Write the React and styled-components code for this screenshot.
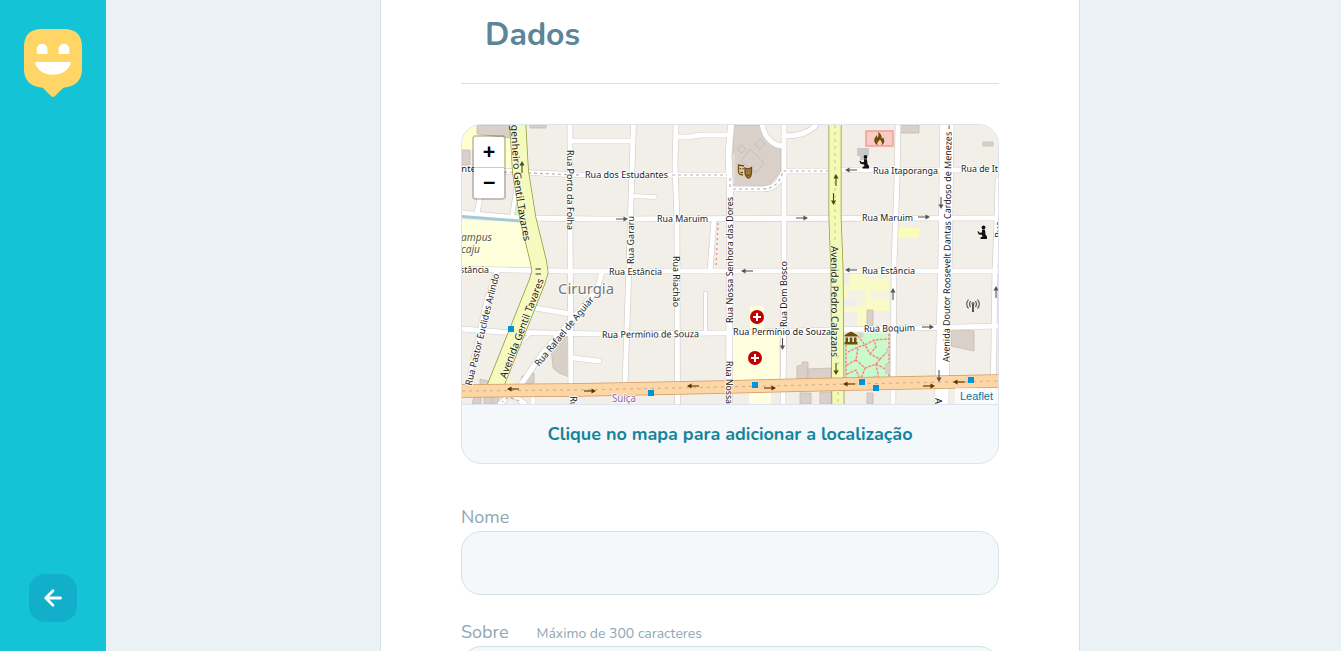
import React from "react";
import styled, { createGlobalStyle } from "styled-components";

const GlobalStyle = createGlobalStyle`
  * { box-sizing: border-box; margin: 0; padding: 0; }
  body { background: #ebf2f5; overflow: hidden; font-family: Nunito, Lato, sans-serif; }
`;

const Page = styled.div`
  display: flex;
  height: 100vh;
  overflow: hidden;
`;

const Sidebar = styled.aside`
  flex: 0 0 106px;
  display: flex;
  flex-direction: column;
  justify-content: space-between;
  align-items: center;
  padding: 29px 0;
  background: #15c3d6;
`;

const BackButton = styled.button`
  display: flex;
  align-items: center;
  justify-content: center;
  width: 48px;
  height: 48px;
  border: 0;
  border-radius: 16px;
  background: #12afcb;
`;

const Main = styled.main`
  flex: 1;
  display: flex;
  justify-content: center;
  padding-right: 107px;
  padding-left: 106px;
`;

const Form = styled.form`
  flex: 0 0 700px;
  height: 900px;
  padding: 0 80px;
  background: #fff;
  border: solid #d3e2e5;
  border-width: 0 1px;
  margin-left: 14px;
`;

const Legend = styled.h1`
  height: 84px;
  margin-bottom: 40px;
  padding: 15px 24px 0;
  border-bottom: 1px solid #d3e2e5;
  color: #5c8599;
  font-size: 32px;
  font-weight: 700;
  line-height: 40px;
`;

const MapCard = styled.section`
  height: 340px;
  display: flex;
  flex-direction: column;
  overflow: hidden;
  border: 1px solid #dde3f0;
  border-radius: 20px;
  background: #f4f8fb;
`;

const MapView = styled.div`
  position: relative;
  height: 279px;
  svg { display: block; }
`;

const ZoomControl = styled.div`
  position: absolute;
  top: 10px;
  left: 10px;
  width: 34px;
  border: 2px solid rgba(0, 0, 0, 0.2);
  border-radius: 4px;
  background-clip: padding-box;
`;

const ZoomButton = styled.button`
  display: block;
  width: 30px;
  height: ${(p) => (p.$divided ? 31 : 30)}px;
  border: 0;
  border-bottom: ${(p) => (p.$divided ? "1px solid #ccc" : "0")};
  border-radius: ${(p) => (p.$divided ? "2px 2px 0 0" : "0 0 2px 2px")};
  background: #fff;
  color: #000;
  font: bold 20px/28px "DejaVu Sans Mono", monospace;
  padding-bottom: 2px;
`;

const Attribution = styled.div`
  position: absolute;
  right: 0;
  bottom: 0;
  padding: 0 5px;
  background: rgba(255, 255, 255, 0.7);
  color: #0078a8;
  font: 11px/16px "Liberation Sans", Arial, sans-serif;
`;

const MapFooter = styled.footer`
  flex: 1;
  border-top: 1px solid #dde3f0;
  color: #15849a;
  text-align: center;
  font-size: 18px;
  font-weight: 700;
  line-height: 58px;
`;

const Field = styled.div`
  margin-top: ${(p) => p.$gap}px;
`;

const Label = styled.label`
  display: flex;
  align-items: center;
  height: 28px;
  color: #8fa7b3;
  font-size: 18px;
  line-height: 28px;
`;

const Hint = styled.span`
  margin-left: 28px;
  padding-top: 3px;
  font-size: 14px;
`;

const Input = styled.div`
  height: ${(p) => p.$height}px;
  border: 1px solid #d3e2e5;
  border-radius: 20px;
  background: #f4f8fb;
`;

/* Centre line and width of each minor street */
const STREETS = [
  ["M462 213L520 218L600 219L998 218", 5],
  ["M462 269L560 271L760 271L998 271", 5],
  ["M462 329L500 332L600 334L720 333L831 330L998 326", 5],
  ["M480 170L580 175L728 175", 5],
  ["M729 189H762Q776 189 781 177Q783 171 790 171L831 171L845 170L998 170", 5],
  ["M570 125V210L571 404", 5],
  ["M633.500 125L632 170L629 265L625 384", 5],
  ["M676 125L675 165L677 220L677.500 404", 5],
  ["M731 125L728.500 155L730 190L729 404", 6],
  ["M784 125L784 290L783 404", 5],
  ["M898 125L897 180L894 265L893 404", 5],
  ["M998 180L997 220L995 270L993 404", 5],
  ["M571 141H632", 5],
  ["M632 196L655 197", 4],
  ["M677 137H689Q697 135 704 135H730", 5],
  ["M762 120Q762 134 772 142Q777 146 784 146", 5],
  ["M784 136Q799 136 806 132Q814 129 817 123", 5],
  ["M714 220L710 271", 5],
  ["M705.500 293V333", 3],
  ["M535 308L571 314", 5],
  ["M573 358L599 361", 5],
  ["M602 272L597 290L542 354L520 386", 5],
  ["M497 271L487 300L468 386", 5],
  ["M529 335L517 348", 2],
  ["M483 180L477 214", 5],
  ["M517 185L512 216", 4],
  ["M533 394V404", 5],
  ["M515 390L500 404M507 390L525 404", 5],
];

const BUILDINGS = [
  "477,125 509,125 510,138 477,134",
  "462,150 470,150 470,165 462,165",
  "530,125 546,125 546,128 530,128",
  "733,125 761,125 764,136 781,148 781,172 768,186 733,187",
  "551,347 569,333 569,377 559,373 553,368",
  "900,125 919,125 919,133 900,133",
  "983,142 993,142 993,146 983,146",
  "951,329 974,331 974,351 951,346",
  "797,366 802,365 802,362 808,362 808,379 797,379",
  "808,369 831,368 831,380 808,380",
  "800,393 811,393 811,404 800,404",
  "820,392 831,392 831,404 820,404",
  "867,310 873,310 873,326 867,326",
  "867,393 873,393 873,404 867,404",
  "474,396 481,396 481,404 472,404",
  "484,396 492,396 492,404 484,404",
  "493,395 500,395 497,404 493,404",
  "480,379 488,381 487,385 480,385",
  "522,376 534,373 534,383 520,384",
];

/* text, x, y of the baseline start, drawn length, angle */
const NAMES = [
  ["ante", 456, 171.500, 20, 0],
  ["Rua dos Estudantes", 585, 178, 83, 0],
  ["Rua Maruim", 657, 222, 51, 0],
  ["Rua Maruim", 862, 221, 51, 0],
  ["Rua Itaporanga", 873, 174, 65, 0],
  ["Rua de Ita", 961, 172, 42, 0],
  ["Rua Estância", 609, 275, 53, 0],
  ["Rua Estância", 862, 274, 53, 0],
  ["stância", 460, 273, 29, 0],
  ["Rua Permínio de Souza", 602, 338, 97, -0.500],
  ["Rua Permínio de Souza", 733, 335, 98, 0],
  ["Rua Boquim", 864, 332, 51, -1],
  ["Rua Porto da Folha", 567, 150, 80, 90],
  ["Rua Riachão", 673, 256, 51, 90],
  ["Rua Nossa", 726, 361, 43, 90],
  ["Rua", 569.500, 396, 17, 90],
  ["Rua Gararu", 634, 264, 48, -90],
  ["Rua Nossa Senhora das Dores", 733, 323, 126, -90],
  ["Rua Dom Bosco", 787, 327, 66, -90],
  ["Avenida Doutor Roosevelt Dantas Cardoso de Menezes –", 949.500, 362, 237, -89.500],
  ["A", 935, 398, 6, 90],
  ["Rua Pastor Euclides Arlindo", 471.500, 386, 115, -76],
  ["Rua Rafael de Aguiar", 539, 367, 87, -50.500],
  ["Rua", 1001.500, 238, 17, -90],
];

const AVENUES = [
  ["Avenida Pedro Calazans", 831, 246, 111, 89.800],
  ["Avenida Gentil Tavares", 506, 379, 106, -69],
];

/* centre and heading of each one-way arrow */
const ARROWS = [
  [622, 219, 0], [802, 218, 0], [924, 217, 0], [928, 327, 0],
  [851, 170, 180], [747, 271, 180], [851, 270, 180],
  [782.500, 344, 90], [941, 203, 90], [939, 376, 90],
  [893, 294, -90], [996, 292, -90],
];
const MAIN_ARROWS = [
  [513, 389, 180], [590, 391, 0], [693, 386, 180], [770, 388, 0],
  [849, 384, 180], [929, 386, 0], [959, 382, 180],
  [836, 180, -90], [833.500, 199, 90], [836, 369, 90], [522, 167, -90],
];

const Arrow = ({ at: [x, y, angle], color }) => (
  <g transform={`translate(${x} ${y}) rotate(${angle})`}>
    <path d="M-6 0H3" stroke={color} strokeWidth="1.100" />
    <path d="M1.500 -2.500L6 0L1.500 2.500Z" fill={color} />
  </g>
);

const Pray = ({ x, y }) => (
  <g transform={`translate(${x} ${y})`}>
    <circle cx="7" cy="2" r="1.900" />
    <path d="M5.500 4.200H8.500L9 9L10.500 11V13.500H4V12L6 11L5.500 9.500L2 8.800L1 6L2 5.700L3 7.300L5.500 7Z" />
  </g>
);

const CityMap = () => (
  <svg width="536" height="279" viewBox="462 125 536 279">
    <rect x="462" y="125" width="536" height="279" fill="#f2efe9" />
    <path d="M462 125H516L518 170L480 168V150H462Z" fill="#ffffcf" />
    <path d="M462 220L522 222L531 268L462 266Z" fill="#ffffdc" />
    <path d="M750 306H764V330H779V380H732V334H750ZM749 393H771V404H749Z" fill="#ffffe0" />
    <path d="M897 228H919V238H897Z" fill="#fcfcb9" />
    <path d="M850 274H890V311H872V326H857V312H844V307H857V298H844V286H850Z" fill="#fafac4" />
    <path d="M505 379L518 384H502Z" fill="#f7fabf" />
    <path d="M848 290H866V305H848ZM870 291H890V299H870ZM844 312H856V326H844ZM872 311H890V326H872ZM866 276H890V279H866Z" fill="#f2efe9" opacity=".75" />
    <path d="M517 203L514 217H523Z" fill="#c8facc" />
    <g fill="#d9d0c9" stroke="#c4b6ab" strokeWidth=".7">
      {BUILDINGS.map((points) => <polygon key={points} points={points} />)}
      <path d="M750 149L764 163L756 173L741 161ZM755 145L760 139L765 144L760 149ZM737 150L741 145L746 149L742 153Z" fill="none" />
    </g>
    <path d="M857 148H869V156H865V160H860V156H857Z" fill="#c9c9c9" />
    <path d="M844 333H890V380H844Z" fill="#c8facc" />
    <g fill="none" stroke="#ecc9b8" strokeWidth="1.600">
      <path id="trails" d="M846 345V379H889V333M858 336L865 345L874 340L889 339M848 352L858 347L865 345L870 354L880 359L889 350M847 365L856 360L858 347M856 360L865 368L876 364L880 359M865 368L861 379M876 364L879 379M876 364L889 371M870 354L876 347L874 340M847 374L856 370L860 379" />
    </g>
    <g fill="none" stroke="#ee8078" strokeWidth="1.200" strokeDasharray="2 2">
      <use href="#trails" />
      <path d="M718 223L716 268" strokeDasharray="2 3" />
    </g>
    <path d="M844 332H853L858 337H844Z" fill="#f2efe9" />
    <g fill="#d9d0c9"><circle cx="861" cy="335" r="2.500" /><path d="M886 348H890V353H886ZM885 363H890V374H885ZM871 377L877 375L881 380H871Z" /></g>

    <g fill="none" strokeLinecap="round" strokeLinejoin="round">
      <g stroke="#cfccc7">
        {STREETS.map(([d, w]) => <path key={d} d={d} strokeWidth={w + 1.200} />)}
        <path d="M947 120L945 265L941.500 408" strokeWidth="14.500" />
      </g>
      <g stroke="#fff">
        {STREETS.map(([d, w]) => <path key={d} d={d} strokeWidth={w} />)}
        <path d="M947 120L945 265L941.500 408" strokeWidth="13.500" />
      </g>
    </g>
    <path d="M734 154V184" stroke="#e9e0d5" strokeWidth="1.500" />
    <path d="M462 216.500L520 221" stroke="#a2cbd6" strokeWidth="3" />
    <g fill="none" stroke="#b9aaba" strokeWidth="1.200" strokeDasharray="3 3">
      <path d="M504 172L580 175M672 175H727M730 178V187M733 189H762Q776 189 781 177L783 171H831M505 396L520 401M513 394L502 402" />
    </g>

    <g fill="none" strokeLinejoin="round">
      <path d="M517.500 120L520.500 172L528 219L538.500 262L540 272L537 282L495 387" stroke="#8e973c" strokeWidth="16.800" />
      <path d="M517.500 120L520.500 172L528 219L538.500 262L540 272L537 282L495 387" stroke="#f7fabf" strokeWidth="15.300" />
      <path d="M835 120V218L837 270L838 408" stroke="#8e973c" strokeWidth="13" />
      <path d="M835 120V218L837 270L838 408" stroke="#f4f9b4" strokeWidth="11.500" />
      <path d="M835 125V242M838 355V376M838 392V404" stroke="#c0c39c" strokeWidth="1" strokeDasharray="3 4" />
      <path d="M458 391L575 390L725 387L850 384L1000 381" stroke="#cf9b60" strokeWidth="13.500" />
      <path d="M458 391L575 390L725 387L850 384L1000 381" stroke="#fcd6a4" strokeWidth="12" />
      <path d="M462 391L575 390L725 387L850 384L998 381" stroke="#d3a98a" strokeWidth="1" strokeDasharray="3 4" />
      <path d="M535.500 269H541M535.500 274H541" stroke="#777" strokeWidth="1.500" />
    </g>

    {ARROWS.map((a) => <Arrow key={a.join()} at={a} color="#555" />)}
    {MAIN_ARROWS.map((a) => <Arrow key={a.join()} at={a} color={a[1] > 375 ? "#5a3000" : "#455000"} />)}

    <g fontFamily="Noto Sans, sans-serif" fontSize="9.400" fill="#1c1c1c" stroke="#fff" strokeOpacity=".8" strokeWidth="2" strokeLinejoin="round" paintOrder="stroke">
      {NAMES.map(([text, x, y, length, angle]) => (
        <text key={`${text}${x}`} textLength={length} lengthAdjust="spacingAndGlyphs" transform={`translate(${x} ${y}) rotate(${angle})`}>{text}</text>
      ))}
      {AVENUES.map(([text, x, y, length, angle]) => (
        <text key={text} fontSize="10" strokeOpacity=".3" textLength={length} lengthAdjust="spacingAndGlyphs" transform={`translate(${x} ${y}) rotate(${angle})`}>{text}</text>
      ))}
      <path id="gentil" d="M511 118Q512 165 516 194T525 246" fill="none" stroke="none" />
      <text fontSize="10" strokeOpacity=".3"><textPath href="#gentil" textLength="124" lengthAdjust="spacingAndGlyphs">ngenheiro Gentil Tavares</textPath></text>
      <text x="558" y="294" fontSize="14.600" textLength="56" lengthAdjust="spacingAndGlyphs" fill="#777">Cirurgia</text>
      <text x="612" y="402" fontSize="10" textLength="24" lengthAdjust="spacingAndGlyphs" fill="#8d6798">Suíça</text>
      <g fontStyle="italic" fontSize="10" fill="#5c5c3e" strokeOpacity=".4">
        <text x="461" y="241" textLength="31" lengthAdjust="spacingAndGlyphs">ampus</text>
        <text x="461" y="252.500" textLength="19" lengthAdjust="spacingAndGlyphs">caju</text>
      </g>
    </g>

    <g fill="#0092da">
      {[[511, 329], [651, 393], [755, 385], [862, 382], [876, 388], [971, 380]].map(([x, y]) => (
        <rect key={x} x={x - 3} y={y - 3} width="6" height="6" />
      ))}
    </g>
    {[[757, 317], [755, 358]].map(([x, y]) => (
      <g key={y}>
        <circle cx={x} cy={y} r="7" fill="#bf0000" />
        <path d={`M${x - 4} ${y}H${x + 4}M${x} ${y - 4}V${y + 4}`} stroke="#fff" strokeWidth="2" />
      </g>
    ))}
    <rect x="866" y="131" width="27" height="15" fill="#f8cbc5" stroke="#f79b98" strokeWidth="1.500" />
    <path d="M877.500 145.500C872 141.500 874.500 138 877 135L877.500 138C879 136 878.500 133.500 878 132C881.500 134 882 137 881.500 139L883 137.500C885.500 141 884 144 881.500 145.500C883 142.500 881 141.500 880 139.500C878 141.500 876.500 143 877.500 145.500Z" fill="#734a08" />
    <g fill="#111"><Pray x="858.500" y="155" /><Pray x="976.500" y="225.500" /></g>
    <g fill="none" stroke="#734a08" strokeWidth="1.300">
      <path d="M744 166L738.500 165V172Q739 175 743 175M740.500 168V169.500M743 168V169.500M740.500 172.500H743" />
      <path d="M745 168Q748 170 751.500 167.500V173Q751 178 748 178Q745 176 745 172Z" fill="#a5824c" />
      <path d="M747 171.500H748M749.500 171.500H750.500M747 175H750" />
    </g>
    <path d="M844.500 335L851 331.500L857.500 335V336.500H844.500ZM845.500 337.500H848V342H845.500ZM849.800 337.500H852.300V342H849.800ZM854 337.500H856.500V342H854ZM844.500 342H857.500V344.500H844.500Z" fill="#734a08" />
    <g fill="none" stroke="#555" strokeWidth="1.100">
      <path d="M973 304V312" strokeWidth="2" />
      <path d="M970.500 301Q968.500 304 970.500 307M968.500 299.500Q965 304 968.500 308.500M975.500 301Q977.500 304 975.500 307M977.500 299.500Q981 304 977.500 308.500" />
      <circle cx="973" cy="303.500" r="1" />
    </g>
  </svg>
);

const Logo = () => (
  <svg width="58" height="69" viewBox="0 0 58 69">
    <path d="M18 0H40Q58 0 58 18V40Q58 56 41 58.500Q39.500 58.500 38.500 59.500L31 67Q29 69 27 67L19.500 59.500Q18.500 58.500 17 58.500Q0 56 0 40V18Q0 0 18 0Z" fill="#ffd666" />
    <path d="M12.800 25V20A5.300 5.300 0 0 1 23.500 20V25ZM34.600 25V20A5.300 5.300 0 0 1 45.300 20V25Z" fill="#fff" />
    <path d="M12.500 33H45.500Q47.500 33 46.500 35.500C43 43 36 45.700 29 45.700S15 43 11.500 35.500Q10.500 33 12.500 33Z" fill="#fff" />
  </svg>
);

export default function App() {
  return (
    <Page>
      <GlobalStyle />
      <Sidebar>
        <Logo />
        <BackButton type="button" aria-label="Voltar">
          <svg width="24" height="24" viewBox="0 0 24 24" fill="none" stroke="#fff" strokeWidth="2.800" strokeLinecap="round" strokeLinejoin="round">
            <path d="M19.500 12H5M12 4.800L4.800 12L12 19.200" />
          </svg>
        </BackButton>
      </Sidebar>
      <Main>
        <Form>
          <Legend>Dados</Legend>
          <MapCard>
            <MapView>
              <CityMap />
              <ZoomControl>
                <ZoomButton type="button" $divided>+</ZoomButton>
                <ZoomButton type="button">−</ZoomButton>
              </ZoomControl>
              <Attribution>Leaflet</Attribution>
            </MapView>
            <MapFooter>Clique no mapa para adicionar a localização</MapFooter>
          </MapCard>
          <Field $gap={39}>
            <Label>Nome</Label>
            <Input $height={64} />
          </Field>
          <Field $gap={23}>
            <Label>Sobre<Hint>Máximo de 300 caracteres</Hint></Label>
            <Input $height={120} />
          </Field>
        </Form>
      </Main>
    </Page>
  );
}
